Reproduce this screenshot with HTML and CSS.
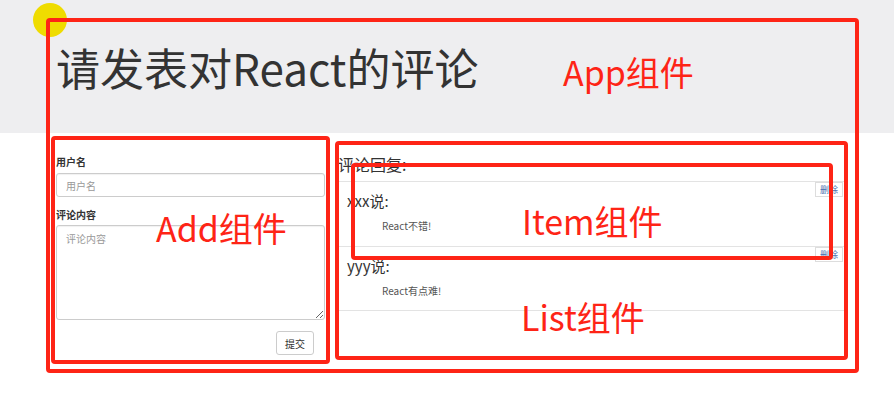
FILE: index.html
```html
<!DOCTYPE html>
<html lang="zh-CN">
<head>
<meta charset="utf-8">
<title>评论</title>
<link rel="stylesheet" href="styles.css">
</head>
<body>
<div class="page">
  <header class="jumbotron">
    <h1 class="title">请发表对React的评论</h1>
  </header>
  <main class="row">
    <form class="add">
      <label class="field-label">用户名</label>
      <input class="control" type="text" placeholder="用户名">
      <label class="field-label gap">评论内容</label>
      <textarea class="control area" placeholder="评论内容"></textarea>
      <div class="actions"><button class="btn" type="button">提交</button></div>
    </form>
    <section class="list">
      <h3 class="reply">评论回复:</h3>
      <ul class="list-group">
        <li class="item">
          <div class="handle"><a class="del" href="#">删除</a></div>
          <p class="user">xxx说:</p>
          <p class="content">React不错!</p>
        </li>
        <li class="item">
          <div class="handle"><a class="del" href="#">删除</a></div>
          <p class="user">yyy说:</p>
          <p class="content">React有点难!</p>
        </li>
      </ul>
    </section>
  </main>

  <div class="dot"></div>
  <div class="box box-app"></div>
  <div class="box box-add"></div>
  <div class="box box-list"></div>
  <div class="box box-item"></div>
  <span class="tag tag-app">App组件</span>
  <span class="tag tag-add">Add组件</span>
  <span class="tag tag-item">Item组件</span>
  <span class="tag tag-list">List组件</span>
</div>
</body>
</html>
```
FILE: styles.css
```css
* { box-sizing: border-box; }
html, body { margin: 0; padding: 0; background: #fff; }
body {
  font-family: "Noto Sans CJK SC", "Noto Sans", sans-serif;
  color: #333;
  width: 894px;
  height: 409px;
  overflow: hidden;
}
.page { position: relative; width: 894px; height: 409px; }

.jumbotron {
  background: #eeeef0;
  height: 133px;
  padding: 41px 0 0 56px;
}
.title {
  margin: 0;
  font-size: 44px;
  line-height: 52px;
  font-weight: 400;
  color: #333;
}

.row {
  display: flex;
  padding-left: 56px;
}
.add {
  width: 269px;
  margin-right: 11px;
  padding-top: 22px;
  display: flex;
  flex-direction: column;
}
.field-label {
  font-size: 10px;
  line-height: 14px;
  font-weight: 700;
  color: #333;
  margin-bottom: 4px;
}
.field-label.gap { margin-top: 11px; margin-bottom: 3px; }
.control {
  width: 269px;
  height: 24px;
  border: 1px solid #ccc;
  border-radius: 3px;
  padding: 0 9px;
  font-family: inherit;
  font-size: 10px;
  color: #555;
  box-shadow: inset 0 1px 1px rgba(0,0,0,.06);
  outline: none;
}
.control::placeholder { color: #999; }
.area {
  height: 95px;
  padding: 5px 9px;
  resize: vertical;
  display: block;
}
.actions {
  display: flex;
  justify-content: flex-end;
  margin-top: 11px;
  padding-right: 11px;
}
.btn {
  width: 38px;
  height: 24px;
  border: 1px solid #ccc;
  border-radius: 3px;
  background: #fff;
  font-family: inherit;
  font-size: 10px;
  color: #333;
  padding: 0;
}

.list { width: 509px; padding-top: 20px; }
.reply {
  margin: 0 0 6px 2px;
  font-size: 16px;
  line-height: 22px;
  font-weight: 400;
  color: #333;
}
.list-group { list-style: none; margin: 0; padding: 0; }
.item {
  height: 65px;
  border-top: 1px solid #e3e3e3;
  padding: 9px 2px 0 11px;
}
.item:last-child { border-bottom: 1px solid #e3e3e3; }
.handle { float: right; margin-top: -9px; }
.del {
  display: block;
  width: 28px;
  height: 15px;
  border: 1px solid #ddd;
  font-size: 9px;
  line-height: 13px;
  text-align: center;
  color: #4a72b0;
  text-decoration: none;
  background: #fff;
}
.user {
  margin: 0;
  font-size: 15px;
  line-height: 20px;
  color: #333;
}
.content {
  margin: 8px 0 0 35px;
  font-size: 10px;
  line-height: 14px;
  color: #555;
}

/* annotations overlay */
.dot {
  position: absolute;
  left: 33px; top: 3px;
  width: 34px; height: 34px;
  border-radius: 50%;
  background: #efdc00;
}
.box {
  position: absolute;
  border: 4px solid #fe2416;
  border-radius: 4px;
}
.box-app { left: 46px; top: 18px; width: 813px; height: 355px; }
.box-add { left: 51px; top: 136px; width: 279px; height: 228px; }
.box-list { left: 335px; top: 141px; width: 513px; height: 219px; }
.box-item { left: 351px; top: 163px; width: 482px; height: 97px; }
.tag {
  position: absolute;
  font-size: 34px;
  line-height: 1;
  color: #fe2416;
  white-space: nowrap;
}
.tag-app { left: 563px; top: 55px; }
.tag-add { left: 156px; top: 211px; }
.tag-item { left: 522px; top: 204px; }
.tag-list { left: 521px; top: 300px; }
```
